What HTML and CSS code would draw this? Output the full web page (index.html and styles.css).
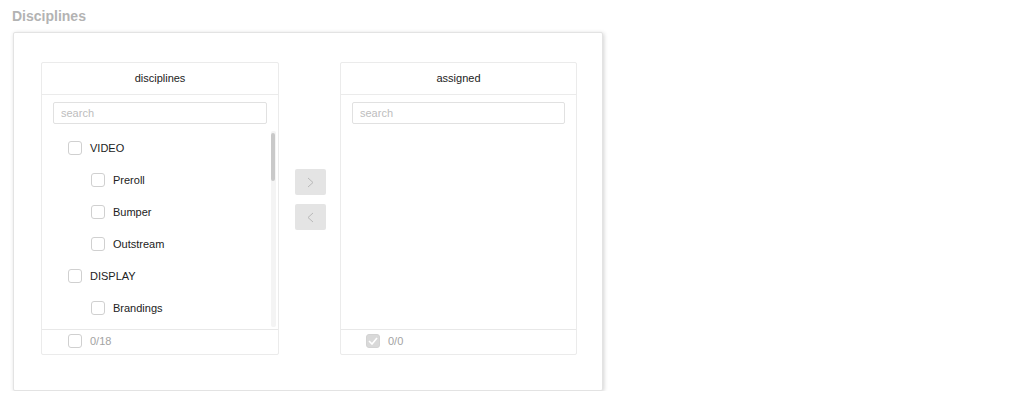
FILE: index.html
```html
<!DOCTYPE html>
<html lang="en">
<head>
<meta charset="utf-8">
<title>Disciplines</title>
<link rel="stylesheet" href="styles.css">
</head>
<body>
<div class="page">
  <div class="title">Disciplines</div>
  <div class="card">
    <div class="transfer">
      <div class="panel">
        <div class="panel-header">disciplines</div>
        <div class="panel-search"><input class="search" type="text" placeholder="search"></div>
        <div class="panel-list">
          <ul class="tree">
            <li class="row lvl0"><span class="cb"></span><span class="label">VIDEO</span></li>
            <li class="row lvl1"><span class="cb"></span><span class="label">Preroll</span></li>
            <li class="row lvl1"><span class="cb"></span><span class="label">Bumper</span></li>
            <li class="row lvl1"><span class="cb"></span><span class="label">Outstream</span></li>
            <li class="row lvl0"><span class="cb"></span><span class="label">DISPLAY</span></li>
            <li class="row lvl1"><span class="cb"></span><span class="label">Brandings</span></li>
          </ul>
          <div class="scroll-track"><div class="scroll-thumb"></div></div>
        </div>
        <div class="panel-footer"><span class="cb"></span><span class="count">0/18</span></div>
      </div>
      <div class="actions">
        <button class="move" type="button"><svg width="7" height="11" viewBox="0 0 7 11"><polyline points="1,1 6,5.5 1,10" fill="none" stroke="#b9b9b9" stroke-width="1"/></svg></button>
        <button class="move" type="button"><svg width="7" height="11" viewBox="0 0 7 11"><polyline points="6,1 1,5.5 6,10" fill="none" stroke="#b9b9b9" stroke-width="1"/></svg></button>
      </div>
      <div class="panel panel-right">
        <div class="panel-header">assigned</div>
        <div class="panel-search"><input class="search" type="text" placeholder="search"></div>
        <div class="panel-list"></div>
        <div class="panel-footer"><span class="cb checked"><svg width="10" height="8" viewBox="0 0 10 8"><polyline points="1,4 4,7 9,1" fill="none" stroke="#ffffff" stroke-width="1.6"/></svg></span><span class="count">0/0</span></div>
      </div>
    </div>
  </div>
</div>
</body>
</html>
```
FILE: styles.css
```css
* {
  box-sizing: border-box;
}

html, body {
  margin: 0;
  padding: 0;
  background: #ffffff;
}

body {
  font-family: "Liberation Sans", Arial, Helvetica, sans-serif;
  color: #333333;
}

.page {
  padding: 8px 0 0 13px;
}

.title {
  font-size: 14px;
  font-weight: bold;
  line-height: 16px;
  color: #b3b3b3;
  margin: 0 0 8px -1px;
}

.card {
  width: 590px;
  height: 359px;
  border: 1px solid #e3e3e3;
  border-radius: 2px;
  box-shadow: 1px 1px 4px rgba(0, 0, 0, 0.18);
  padding: 29px 0 35px 27px;
  background: #ffffff;
}

.transfer {
  display: flex;
  align-items: flex-start;
}

.panel {
  width: 238px;
  height: 293px;
  border: 1px solid #ebebeb;
  border-radius: 2px;
  display: flex;
  flex-direction: column;
}

.panel-right {
  width: 237px;
  margin-left: -1px;
}

.panel-header {
  height: 32px;
  line-height: 31px;
  border-bottom: 1px solid #ebebeb;
  text-align: center;
  font-size: 11px;
  color: #222222;
}

.panel-search {
  padding: 7px 11px 0;
  height: 29px;
}

.search {
  display: block;
  width: 100%;
  height: 22px;
  margin: 0;
  border: 1px solid #e1e1e1;
  border-radius: 2px;
  padding: 0 7px;
  font-family: "Liberation Sans", Arial, Helvetica, sans-serif;
  font-size: 11px;
  color: #333333;
  background: #ffffff;
  outline: none;
}

.search::placeholder {
  color: #bdbdbd;
}

.panel-list {
  position: relative;
  height: 205px;
  overflow: hidden;
}

.tree {
  list-style: none;
  margin: 0;
  padding: 8px 0 0;
}

.row {
  height: 32px;
  display: flex;
  align-items: center;
  gap: 8px;
  font-size: 11px;
  color: #222222;
}

.lvl0 {
  padding-left: 26px;
}

.lvl1 {
  padding-left: 49px;
}

.cb {
  width: 14px;
  height: 14px;
  flex: none;
  border: 1px solid #d0d0d0;
  border-radius: 3px;
  background: #ffffff;
  display: flex;
  align-items: center;
  justify-content: center;
}

.cb.checked {
  background: #d9d9d9;
  border-color: #d3d3d3;
}

.scroll-track {
  position: absolute;
  top: 7px;
  bottom: 2px;
  left: 229px;
  width: 5px;
  background: #f4f4f4;
  border-radius: 2px;
}

.scroll-thumb {
  margin: 2px 0 0;
  height: 48px;
  width: 4px;
  border-radius: 2px;
  background: #c9c9c9;
}

.panel-footer {
  height: 25px;
  border-top: 1px solid #e8e8e8;
  display: flex;
  align-items: center;
  gap: 8px;
  padding: 0 0 3px 26px;
  font-size: 11px;
}

.panel-right .panel-footer {
  padding-left: 25px;
}

.count {
  color: #a3a3a3;
}

.actions {
  width: 62px;
  padding-top: 107px;
  display: flex;
  flex-direction: column;
  align-items: center;
  gap: 9px;
}

.move {
  width: 31px;
  height: 26px;
  margin: 0;
  padding: 0;
  border: none;
  border-radius: 2px;
  background: #e4e4e4;
  display: flex;
  align-items: center;
  justify-content: center;
}
```
